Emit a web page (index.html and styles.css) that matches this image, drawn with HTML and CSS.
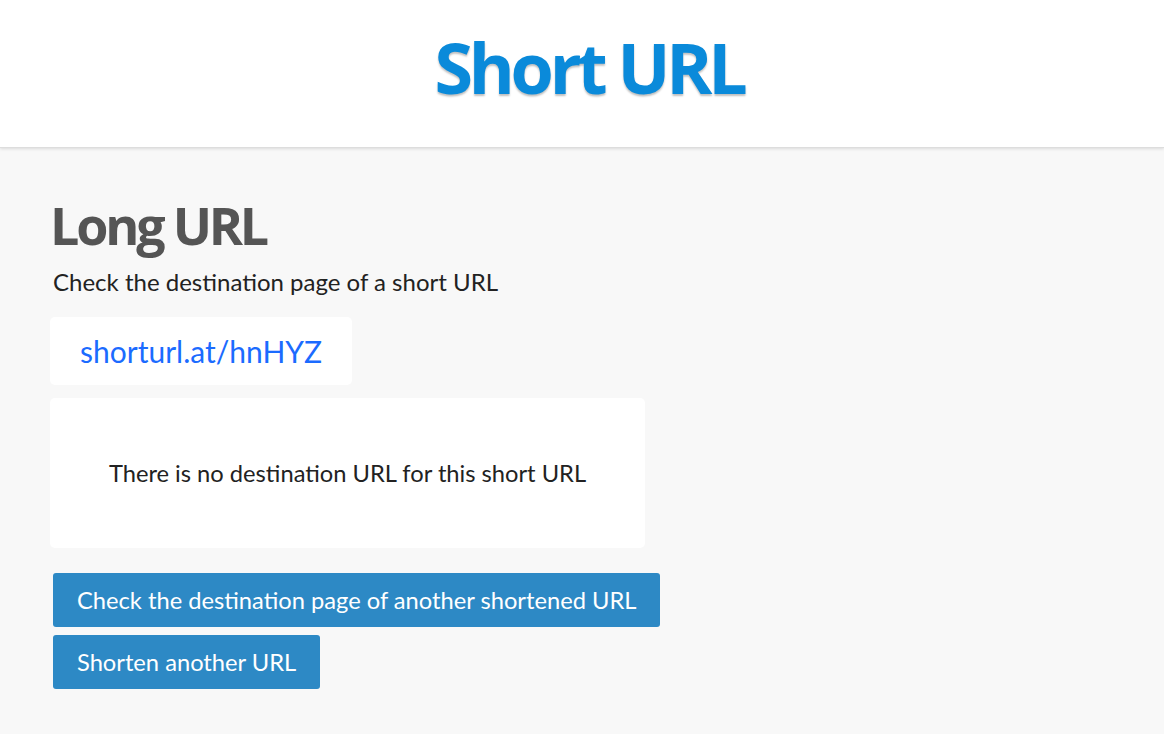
FILE: index.html
```html
<!DOCTYPE html>
<html lang="en">
<head>
<meta charset="utf-8">
<title>Short URL</title>
<link rel="stylesheet" href="styles.css">
</head>
<body>
<header class="site-header">
  <h1 class="logo">Short URL</h1>
</header>
<main class="content">
  <h2 class="title">Long URL</h2>
  <p class="lead">Check the destination page of a short URL</p>
  <div class="short-box"><a class="short-link" href="#">shorturl.at/hnHYZ</a></div>
  <div class="result">There is no destination URL for this short URL</div>
  <div class="actions">
    <a class="btn" href="#">Check the destination page of another shortened URL</a>
    <a class="btn" href="#">Shorten another URL</a>
  </div>
</main>
</body>
</html>
```

FILE: styles.css
```css
* { box-sizing: border-box; }
html, body { margin: 0; padding: 0; }
body {
  background: #f8f8f8;
  font-family: "Lato", "Open Sans", sans-serif;
  color: #222;
  height: 734px;
  overflow: hidden;
}
.site-header {
  background: #fff;
  height: 148px;
  border-bottom: 1px solid #ddd;
  box-shadow: 0 1px 3px rgba(0,0,0,0.12);
  display: flex;
  justify-content: center;
  align-items: center;
}
.logo {
  margin: 0 0 14px 14px;
  font-family: "Open Sans", sans-serif;
  font-weight: 700;
  font-size: 70px;
  letter-spacing: -4.2px;
  color: #0a8ada;
  text-shadow: 0 2px 2px rgba(0,0,0,0.25);
}
.content {
  padding: 46px 50px 0 50px;
  display: flex;
  flex-direction: column;
  align-items: flex-start;
}
.title {
  margin: 0;
  font-family: "Open Sans", sans-serif;
  font-weight: 700;
  font-size: 52px;
  letter-spacing: -3.2px;
  color: #555;
  line-height: 62px;
}
.lead {
  margin: 12px 0 21px 3px;
  font-size: 24px;
  line-height: 28px;
  color: #222;
}
.short-box {
  background: #fff;
  border-radius: 5px;
  height: 68px;
  padding: 0 30px;
  display: flex;
  align-items: center;
}
.short-link {
  color: #1b6bff;
  text-decoration: none;
  font-size: 30px;
}
.result {
  margin-top: 13px;
  width: 595px;
  height: 150px;
  background: #fff;
  border-radius: 5px;
  display: flex;
  align-items: center;
  justify-content: center;
  font-size: 23.7px;
  color: #222;
}
.actions {
  margin: 25px 0 0 3px;
  display: flex;
  flex-direction: column;
  align-items: flex-start;
  gap: 8px;
}
.btn {
  background: #2d89c5;
  color: #fff;
  text-decoration: none;
  font-size: 23.7px;
  height: 54px;
  padding: 0 24px;
  border-radius: 3px;
  display: flex;
  align-items: center;
}
```
